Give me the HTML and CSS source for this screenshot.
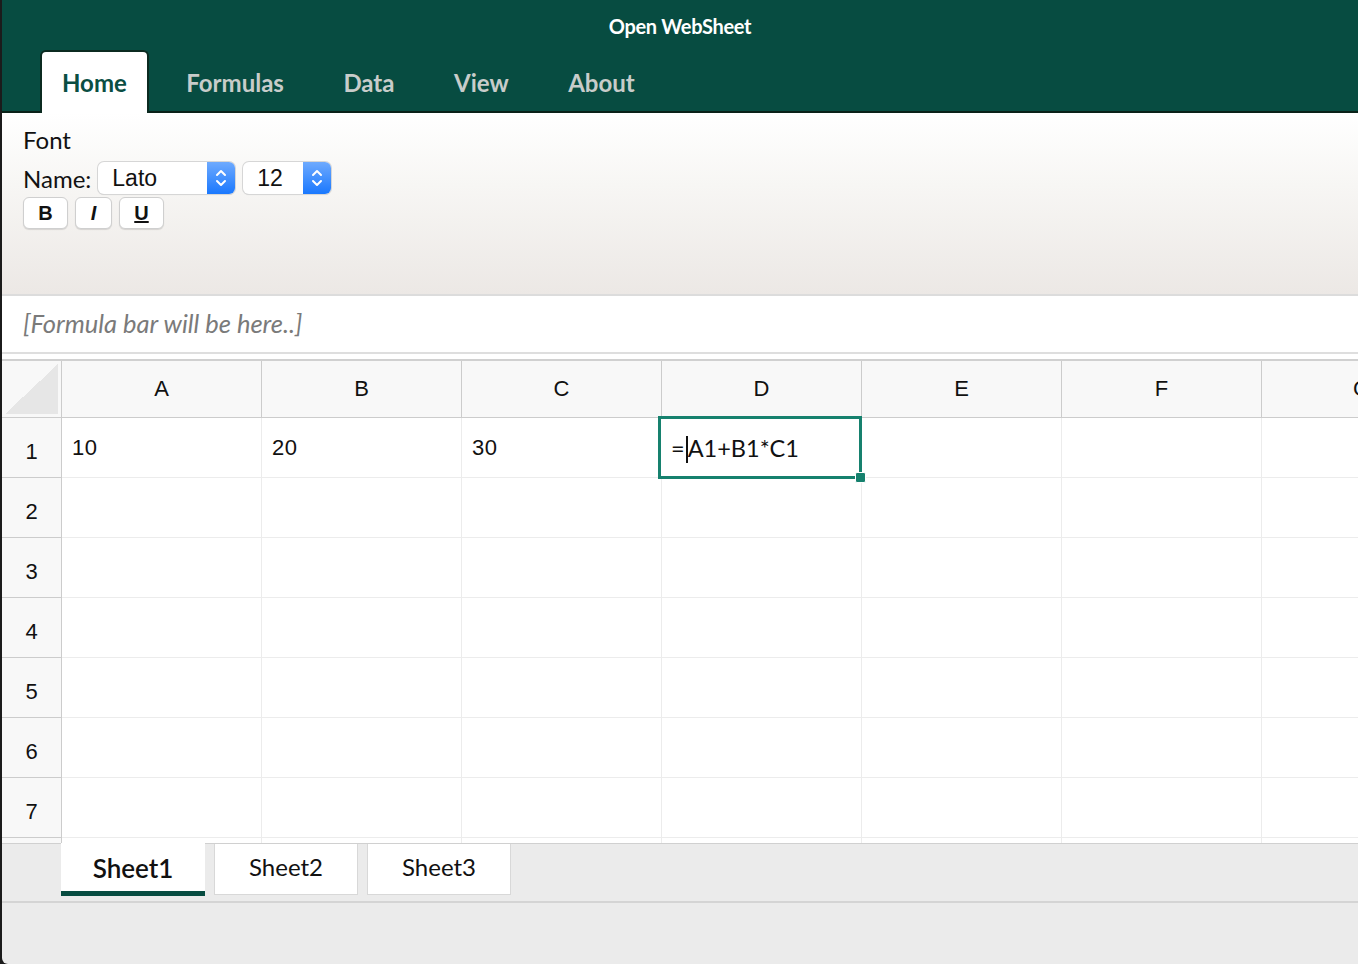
FILE: index.html
```html
<!DOCTYPE html>
<html>
<head>
<meta charset="utf-8">
<title>Open WebSheet</title>
<link rel="stylesheet" href="styles.css">
</head>
<body>
<div class="app">
  <header class="topbar">
    <div class="title">Open WebSheet</div>
    <nav class="tabs">
      <div class="tab active">Home</div>
      <div class="tab">Formulas</div>
      <div class="tab">Data</div>
      <div class="tab">View</div>
      <div class="tab">About</div>
    </nav>
  </header>

  <section class="ribbon">
    <div class="group-label">Font</div>
    <div class="name-row">
      <span class="name-label">Name:</span>
      <div class="select sel-font"><span class="sel-val">Lato</span><span class="stepper"><svg width="14" height="22" viewBox="0 0 14 22"><path d="M3 8 L7 4 L11 8 M3 14 L7 18 L11 14" fill="none" stroke="#fff" stroke-width="2" stroke-linecap="round" stroke-linejoin="round"/></svg></span></div>
      <div class="select sel-size"><span class="sel-val">12</span><span class="stepper"><svg width="14" height="22" viewBox="0 0 14 22"><path d="M3 8 L7 4 L11 8 M3 14 L7 18 L11 14" fill="none" stroke="#fff" stroke-width="2" stroke-linecap="round" stroke-linejoin="round"/></svg></span></div>
    </div>
    <div class="btn-row">
      <button class="fbtn b">B</button>
      <button class="fbtn i">I</button>
      <button class="fbtn u">U</button>
    </div>
  </section>

  <section class="formula">[Formula bar will be here..]</section>

  <section class="sheet">
    <div class="row head">
      <div class="rh corner"><div class="tri"></div></div>
      <div class="ch">A</div><div class="ch">B</div><div class="ch">C</div><div class="ch">D</div><div class="ch">E</div><div class="ch">F</div><div class="ch">G</div>
    </div>
    <div class="row">
      <div class="rh">1</div>
      <div class="c">10</div><div class="c">20</div><div class="c">30</div>
      <div class="c sel"><span class="edit">=<span class="caret"></span>A1+B1*C1</span><span class="handle"></span></div>
      <div class="c"></div><div class="c"></div><div class="c"></div>
    </div>
    <div class="row"><div class="rh">2</div><div class="c"></div><div class="c"></div><div class="c"></div><div class="c"></div><div class="c"></div><div class="c"></div><div class="c"></div></div>
    <div class="row"><div class="rh">3</div><div class="c"></div><div class="c"></div><div class="c"></div><div class="c"></div><div class="c"></div><div class="c"></div><div class="c"></div></div>
    <div class="row"><div class="rh">4</div><div class="c"></div><div class="c"></div><div class="c"></div><div class="c"></div><div class="c"></div><div class="c"></div><div class="c"></div></div>
    <div class="row"><div class="rh">5</div><div class="c"></div><div class="c"></div><div class="c"></div><div class="c"></div><div class="c"></div><div class="c"></div><div class="c"></div></div>
    <div class="row"><div class="rh">6</div><div class="c"></div><div class="c"></div><div class="c"></div><div class="c"></div><div class="c"></div><div class="c"></div><div class="c"></div></div>
    <div class="row"><div class="rh">7</div><div class="c"></div><div class="c"></div><div class="c"></div><div class="c"></div><div class="c"></div><div class="c"></div><div class="c"></div></div>
    <div class="row"><div class="rh"></div><div class="c"></div><div class="c"></div><div class="c"></div><div class="c"></div><div class="c"></div><div class="c"></div><div class="c"></div></div>
  </section>

  <footer class="sheetbar">
    <div class="stab active">Sheet1</div>
    <div class="stab">Sheet2</div>
    <div class="stab">Sheet3</div>
  </footer>
</div>
</body>
</html>
```

FILE: styles.css
```css
* { box-sizing: border-box; }
html, body { margin: 0; padding: 0; }
body {
  width: 1358px;
  height: 964px;
  overflow: hidden;
  background: #1b1b1b;
  font-family: Lato, "Liberation Sans", sans-serif;
}
.app {
  margin-left: 2px;
  width: 1356px;
  height: 964px;
  background: #ebebeb;
  overflow: hidden;
  border-bottom-left-radius: 6px;
}

/* top bar */
.topbar {
  height: 113px;
  background: #074c41;
  border-bottom: 2px solid #0a2219;
  display: flex;
  flex-direction: column;
}
.title {
  height: 50px;
  padding-top: 14px;
  text-align: center;
  color: #fff;
  font-weight: 700;
  font-size: 20px;
  letter-spacing: -0.3px;
  line-height: 24px;
}
.tabs {
  display: flex;
  padding-left: 38px;
  gap: 15.5px;
  height: 61px;
}
.tab {
  padding: 0 20px;
  color: #c8ccca;
  font-weight: 700;
  font-size: 24px;
  line-height: 62px;
  height: 63px;
  border: 2px solid transparent;
  border-bottom: none;
}
.tab.active {
  background: #fff;
  color: #0a4e43;
  border-color: #0b2a20;
  border-radius: 6px 6px 0 0;
  line-height: 61px;
}

/* ribbon */
.ribbon {
  height: 183px;
  background: linear-gradient(#ffffff, #f7f6f4 40%, #ece8e5);
  border-bottom: 2px solid #dcdcdc;
  padding: 13px 21px 0;
}
.group-label {
  font-size: 24px;
  line-height: 28px;
  color: #111;
}
.name-row {
  display: flex;
  align-items: center;
  margin-top: 8px;
  height: 32px;
  gap: 7px;
}
.name-label {
  font-size: 24px;
  color: #111;
}
.select {
  height: 32px;
  display: flex;
  background: #fff;
  border-radius: 6px;
  box-shadow: 0 0 0 1px #d6d6d6, 0 1px 1px rgba(0,0,0,0.15);
  overflow: hidden;
}
.sel-font { width: 137px; }
.sel-size { width: 88px; margin-left: 1px; }
.sel-val {
  flex: 1;
  font-family: "Liberation Sans", Arial, sans-serif;
  font-size: 23px;
  line-height: 32px;
  padding-left: 14px;
  color: #111;
}
.stepper {
  width: 28px;
  background: linear-gradient(#6eaafe, #1a78fe);
  display: flex;
  align-items: center;
  justify-content: center;
}
.btn-row {
  display: flex;
  gap: 7px;
  margin-top: 3px;
}
.fbtn {
  height: 32px;
  background: #fff;
  border: 1px solid #cfcfcf;
  border-radius: 6px;
  box-shadow: 0 1px 1px rgba(0,0,0,0.12);
  font-family: "Liberation Sans", Arial, sans-serif;
  font-weight: 700;
  font-size: 20px;
  color: #111;
  padding: 0;
  margin: 0;
}
.fbtn.b { width: 45px; }
.fbtn.i { width: 37px; font-style: italic; }
.fbtn.u { width: 45px; text-decoration: underline; }

/* formula bar */
.formula {
  height: 58px;
  background: #fff;
  border-bottom: 2px solid #dedede;
  padding-left: 21px;
  font-style: italic;
  font-size: 25.5px;
  line-height: 55px;
  color: #7a7a7a;
}

/* sheet */
.sheet {
  background: #fff;
  padding-top: 5px;
  height: 489px;
  overflow: hidden;
}
.row {
  display: flex;
  height: 60px;
}
.row.head {
  height: 59px;
  border-top: 2px solid #d0d0d0;
}
.rh {
  width: 60px;
  flex: none;
  background: #f8f8f8;
  border-right: 1px solid #cccccc;
  border-bottom: 1px solid #cccccc;
  font-family: "Liberation Sans", Arial, sans-serif;
  font-size: 22px;
  color: #111;
  display: flex;
  align-items: center;
  justify-content: center;
  padding-top: 8px;
}
.rh.corner {
  padding: 3px;
  display: block;
}
.tri {
  width: 100%;
  height: 100%;
  background: linear-gradient(to bottom right, transparent 50%, #e6e6e6 50%);
}
.ch {
  width: 200px;
  flex: none;
  background: #f8f8f8;
  border-right: 1px solid #cccccc;
  border-bottom: 1px solid #cccccc;
  font-family: "Liberation Sans", Arial, sans-serif;
  font-size: 22px;
  color: #111;
  display: flex;
  align-items: center;
  justify-content: center;
}
.c {
  width: 200px;
  flex: none;
  border-right: 1px solid #ececec;
  border-bottom: 1px solid #ececec;
  font-family: "Liberation Sans", Arial, sans-serif;
  font-size: 22px;
  letter-spacing: 0.6px;
  color: #111;
  display: flex;
  align-items: center;
  padding-left: 10px;
}
.c.sel {
  position: relative;
}
.edit {
  position: absolute;
  left: -4px;
  top: -2px;
  width: 204px;
  height: 63px;
  border: 3px solid #16816e;
  font-family: Lato, sans-serif;
  font-size: 23.5px;
  letter-spacing: 0;
  color: #111;
  padding-left: 10px;
  line-height: 58px;
  background: #fff;
}
.caret {
  display: inline-block;
  width: 2px;
  height: 27px;
  background: #111;
  vertical-align: middle;
  margin: -4px 0 0 1px;
}
.handle {
  position: absolute;
  right: -5px;
  bottom: -6px;
  width: 11px;
  height: 11px;
  background: #16816e;
  border-radius: 2px;
  border: 1px solid #fff;
}

/* sheet bar */
.sheetbar {
  height: 60px;
  background: #ebebeb;
  border-top: 1px solid #d0d0d0;
  border-bottom: 2px solid #d4d4d4;
  display: flex;
  gap: 9px;
  padding-left: 59px;
}
.stab {
  width: 144px;
  height: 51px;
  background: #fff;
  border: 1px solid #d8d8d8;
  border-top: none;
  text-align: center;
  font-size: 24px;
  line-height: 46px;
  color: #111;
}
.stab.active {
  height: 53px;
  margin-top: -1px;
  border: none;
  border-bottom: 5px solid #074c41;
  font-size: 26px;
  font-weight: 600;
  line-height: 50px;
}
```
